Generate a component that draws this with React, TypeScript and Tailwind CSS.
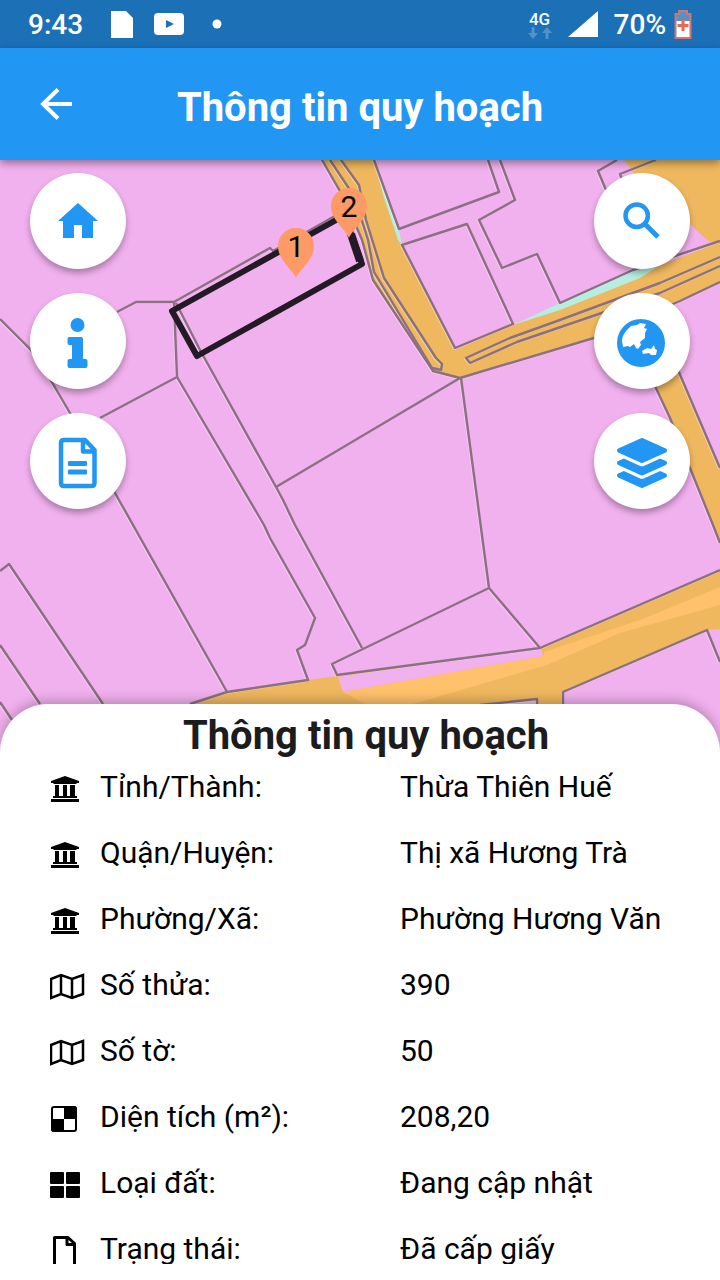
import type { ReactNode } from "react";
import { FaLayerGroup } from "react-icons/fa";

const parcelLines = [
  // upper blocks
  "M374 160L399 229L499 192L488 160",
  "M500 160L515 200L479 220L502 268L537 254L560 303L633 270L720 241",
  "M402 245L467 224L513 324L455 348Z",
  "M617 160L598 171L606 190",
  "M656 160L620 174L622 180",
  // roadside strips
  "M322 160L345 200L362 240L373 280L433 371L460 378L594 338L680 301L720 282",
  "M330 160L354 196L368 240L374 272L432 368L441 370L442 364L436 358L384 278L366 220L359 185L341 160",
  "M720 257L660 283L560 320L510 338L466 358L470 363L517 342L593 316L660 293L720 266",
  "M654 384L670 418L690 468L713 525L720 543",
  "M678 370L720 468",
  // left side
  "M0 319L31 350L50 379L70 413L115 493L227 692",
  "M117 312L136 302L174 302L270 248L273 251L342 212",
  "M174 302L177 377L100 418",
  "M177 377L264 525L270 538L315 618L305 645L297 650L308 680L227 692L190 704",
  "M176 303L200 350L276 487L283 500L295 525L362 648",
  "M0 571L9 564L103 704",
  "M0 645L40 704",
  "M0 702L12 720",
  // lower blocks
  "M460 378L276 487",
  "M461 378L489 588L332 664L337 675L540 648L489 588",
  "M540 648L720 570",
  "M563 752V692L707 630L720 662",
  "M537 752V699L480 705",
];

function Pin({ x, y, label }: { x: number; y: number; label: string }) {
  return (
    <g transform={`translate(${x} ${y})`}>
      <path d="M0 32C-3 24-18 14-18 0A18 18 0 0 1 18 0C18 14 3 24 0 32Z" fill="#fd9a65" />
      <text x="0" y="11" textAnchor="middle" className="fill-black text-[30px]">
        {label}
      </text>
    </g>
  );
}

function ParcelMap() {
  return (
    <svg
      viewBox="0 160 720 592"
      preserveAspectRatio="xMidYMin slice"
      className="col-start-1 row-start-1 h-full w-full"
      role="img"
      aria-label="Bản đồ thửa đất"
    >
      <rect y="160" width="720" height="592" fill="#f1b0ee" />

      {/* Roads */}
      <g fill="#efb75e">
        <path d="M322 160H374L399 229L402 245L455 350L513 325L633 276L720 242V282L680 301L594 338L460 378L433 371L373 280L362 240L345 200Z" />
        <path d="M624 160H720V243L708 241L692 226L640 180Z" />
        <path d="M650 376L678 368L720 468V543L713 525L690 468L670 418Z" />
        <path d="M190 704L227 692L308 680L540 648L720 570V629L707 630L563 692V752H170Z" />
      </g>
      <path d="M338 677L343 692L544 656L540 648Z" fill="#f1b0ee" />
      <path d="M720 587L640 620L544 652V656L343 692L380 712L420 702L547 665L620 633L720 605Z" fill="#ffc16b" />
      <path d="M537 752V699L480 705V752Z" fill="#dcc4cc" />

      {/* Water */}
      <path d="M513 325L560 303L633 270L662 264L640 278L560 310Z" fill="#b5eee0" />
      <path d="M374 161L399 229L402 245L398 240L384 198Z" fill="#b5eee0" />

      <g fill="none" stroke="#fff" strokeOpacity="0.35" strokeWidth="2" transform="translate(-1 1)">
        {parcelLines.map((d) => (
          <path key={d} d={d} />
        ))}
      </g>
      <g fill="none" stroke="#8a7080" strokeWidth="2.4" strokeLinejoin="round">
        {parcelLines.map((d) => (
          <path key={d} d={d} />
        ))}
      </g>

      {/* Selected parcel */}
      <path
        d="M347 214L172 311L197 356L362 264L350 231"
        fill="none"
        stroke="#241a26"
        strokeWidth="6"
        strokeLinejoin="round"
      />
      <path d="M351 234L360 261" stroke="#241a26" strokeWidth="8" />
      <Pin x={296} y={246} label="1" />
      <Pin x={349} y={206} label="2" />
    </svg>
  );
}

function MapButton({ label, children }: { label: string; children: ReactNode }) {
  return (
    <button
      type="button"
      aria-label={label}
      className="size-24 rounded-full bg-white text-[#2196f3] shadow-[0_4px_6px_rgba(0,0,0,0.3)]"
    >
      <svg viewBox="0 0 96 96" className="size-24" fill="currentColor">
        {children}
      </svg>
    </button>
  );
}

const bankIcon = (
  <>
    <path d="M15 7L29 12V14H27L26 15H4L3 14H1V12Z" />
    <path d="M5 16H9V27H13V16H17V27H20V16H25V27H27V29H3V27H5Z" />
    <path d="M1 30H29V33H1Z" />
  </>
);

const mapIcon = (
  <path
    d="M1 12L11 8L22 12L33 8V27L22 31L11 27L1 31ZM11 8V27M22 12V31"
    fill="none"
    stroke="currentColor"
    strokeWidth="2.5"
  />
);

const details = [
  { label: "Tỉnh/Thành:", value: "Thừa Thiên Huế", icon: bankIcon },
  { label: "Quận/Huyện:", value: "Thị xã Hương Trà", icon: bankIcon },
  { label: "Phường/Xã:", value: "Phường Hương Văn", icon: bankIcon },
  { label: "Số thửa:", value: "390", icon: mapIcon },
  { label: "Số tờ:", value: "50", icon: mapIcon },
  {
    label: "Diện tích (m²):",
    value: "208,20",
    icon: (
      <>
        <rect x="2" y="8" width="24" height="24" rx="2" fill="none" stroke="currentColor" strokeWidth="2" />
        <path d="M14 7H25L27 9V20H14ZM1 20H14V33H3L1 31Z" />
      </>
    ),
  },
  {
    label: "Loại đất:",
    value: "Đang cập nhật",
    icon: (
      <>
        <rect x="0" y="7" width="14" height="12" rx="1" />
        <rect x="16" y="7" width="14" height="12" rx="1" />
        <rect x="0" y="21" width="14" height="12" rx="1" />
        <rect x="16" y="21" width="14" height="12" rx="1" />
      </>
    ),
  },
  {
    label: "Trạng thái:",
    value: "Đã cấp giấy",
    icon: (
      <path
        d="M4.5 6.5H18L24.5 12.500V35H4.5ZM17 6.5V13.5H24.5"
        fill="none"
        stroke="currentColor"
        strokeWidth="3"
        strokeLinejoin="round"
      />
    ),
  },
];

function StatusBar() {
  return (
    <div className="flex h-12 shrink-0 items-center justify-between bg-[#1b70b6] px-7 pt-0.5 text-[28px] font-medium text-white">
      <div className="flex items-center">
        <span>9:43</span>
        <svg viewBox="0 0 112 28" className="ml-7 h-7 w-28" fill="currentColor">
          <path d="M0 0H15L22 7V27H0Z" />
          <rect x="43" y="2" width="30" height="22" rx="4" />
          <path d="M55 9V17L63 13Z" fill="#1b70b6" />
          <circle cx="106" cy="13" r="4.5" />
        </svg>
      </div>
      <div className="flex items-center">
        <div className="flex flex-col items-center">
          <span className="text-[17px] leading-4">4G</span>
          <svg viewBox="0 0 24 12" className="h-3 w-6" fill="#4f93cc">
            <path d="M3.5 0h3v6H10l-5 6-5-6h3.5zM17.5 12h3V6H24l-5-6-5 6h3.5z" />
          </svg>
        </div>
        <svg viewBox="0 0 30 28" className="mx-4 h-7 w-[30px]" fill="currentColor">
          <path d="M30 0V26H0Z" />
        </svg>
        <span>70%</span>
        <svg viewBox="0 0 18 30" className="ml-2 h-[30px] w-[18px]">
          <path d="M5 1H13V4H16.5V28H1.5V4H5Z" fill="#5a91c4" stroke="#cf7670" strokeWidth="2" />
          <path d="M2.5 11H15.5V27H2.5Z" fill="#fff" />
          <path d="M9 10V21M3.5 15.5H14.5" stroke="#ea6850" strokeWidth="3" />
        </svg>
      </div>
    </div>
  );
}

export default function App() {
  return (
    <main className="flex h-screen flex-col overflow-hidden bg-white font-['Roboto','Noto_Sans',sans-serif]">
      <StatusBar />

      {/* App bar */}
      <header className="z-10 grid h-28 shrink-0 grid-cols-[112px_1fr_112px] items-center bg-[#2196f3] text-white shadow-[0_3px_8px_rgba(0,0,0,0.4)]">
        <button type="button" aria-label="Quay lại" className="flex h-full items-center justify-center">
          <svg viewBox="0 0 32 32" className="size-8" fill="none" stroke="currentColor" strokeWidth="4">
            <path d="M18 1.5L3 16L18 30.5M3 16H32" />
          </svg>
        </button>
        <h1 className="pt-2 text-center text-[40px] leading-12 font-bold">Thông tin quy hoạch</h1>
      </header>

      {/* Map, runs on behind the rounded corners of the sheet */}
      <section className="-mb-12 grid min-h-0 flex-1 grid-rows-[minmax(0,1fr)]">
        <ParcelMap />
        <div className="z-1 col-start-1 row-start-1 flex justify-between px-[30px] pt-[13px]">
          <div className="flex flex-col gap-6">
            <MapButton label="Trang chủ">
              <path d="M48 30L68 48H63V65H52V52H44V65H33V48H28Z" />
            </MapButton>
            <MapButton label="Thông tin">
              <circle cx="47.5" cy="32" r="7" />
              <path d="M39.5 44H51q2 0 2 2V66h2.5q2 0 2 2v5q0 2-2 2h-16q-2 0-2-2v-5q0-2 2-2h2.500V52h-2.500q-2 0-2-2v-4q0-2 2-2z" />
            </MapButton>
            <MapButton label="Tài liệu">
              <path
                d="M34 27H55L64.5 37V70Q64.5 73 61.5 73H34Q31 73 31 70V30Q31 27 34 27ZM53 27V38.5H64.5"
                fill="none"
                stroke="currentColor"
                strokeWidth="4.5"
                strokeLinejoin="round"
              />
              <rect x="38" y="48" width="19" height="5" rx="1" />
              <rect x="38" y="56.5" width="19" height="5" rx="1" />
            </MapButton>
          </div>
          <div className="flex flex-col gap-6">
            <MapButton label="Tìm kiếm">
              <circle cx="42.7" cy="42.7" r="11.2" fill="none" stroke="currentColor" strokeWidth="4.5" />
              <path d="M51 51L64 64" stroke="currentColor" strokeWidth="5" />
            </MapButton>
            <MapButton label="Bản đồ nền">
              <circle cx="47" cy="50" r="24" />
              <path
                d="M28 48C28 44 30 40 33 37L37 33L43 32L46 30L52 31L50 35L53 36L51 40L51 45L46 49L47 52L44 56L42 55L40 51L36 54L34 53L29 54Z"
                fill="#fff"
              />
              <path d="M48 58L53 55L57 56L60 52L61 56L63 57L62 62L57 62L55 60L49 61Z" fill="#fff" />
            </MapButton>
            <MapButton label="Lớp bản đồ">
              <FaLayerGroup x={23} y={25} size={50} />
            </MapButton>
          </div>
        </div>
      </section>

      {/* Bottom sheet */}
      <section className="z-10 flex h-[45vh] shrink-0 flex-col rounded-t-[48px] bg-white pt-2 pb-4 shadow-[0_-3px_12px_rgba(0,0,0,0.25)]">
        <h2 className="pl-3 text-center text-[40px] leading-12 font-bold text-[#1c1c1c]">Thông tin quy hoạch</h2>
        <dl className="flex min-h-0 flex-1 flex-col gap-3 overflow-y-auto pr-6 pl-[50px] text-[30px] leading-[54px] text-black [scrollbar-width:none]">
          {details.map((item) => (
            <div key={item.label} className="grid shrink-0 grid-cols-[300px_1fr] gap-x-[50px]">
              <dt className="flex items-center gap-[14px] whitespace-nowrap">
                <svg viewBox="0 0 36 36" className="size-9 shrink-0" fill="currentColor" aria-hidden="true">
                  {item.icon}
                </svg>
                {item.label}
              </dt>
              <dd>{item.value}</dd>
            </div>
          ))}
        </dl>
      </section>
    </main>
  );
}
